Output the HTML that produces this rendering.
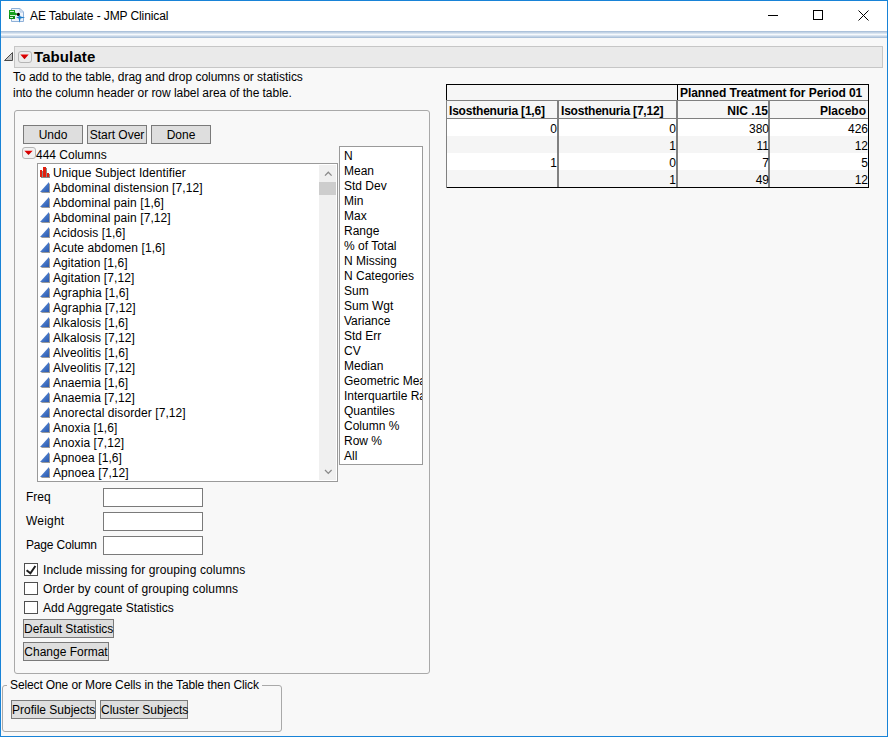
<!DOCTYPE html>
<html><head><meta charset="utf-8"><style>
*{box-sizing:border-box}
html,body{margin:0;padding:0}
body{width:888px;height:737px;overflow:hidden;position:relative;background:#f8f8f8;font-family:"Liberation Sans",sans-serif;font-size:12px;color:#000}
.a{position:absolute}
.t{position:absolute;white-space:nowrap;font-size:12px;line-height:15px}
.btn{position:absolute;height:19px;border:1px solid #7a7a7a;background:#dedede;font-size:12px;line-height:19px;text-align:center;white-space:nowrap}
.li{position:absolute;left:0;height:15px;white-space:nowrap;line-height:15px;letter-spacing:0.08px}
.li .ic{position:absolute;left:2px;top:1px}
.li span{position:absolute;left:15px;top:0}
.si{position:absolute;left:4px;height:15px;white-space:nowrap;line-height:15px}
.tb{position:absolute;width:100px;height:19px;border:1px solid #7a7a7a;background:#fff}
.cb{position:absolute;left:24px;width:14px;height:13px;border:1px solid #505050;background:#fff}
</style></head><body>
<!-- window frame -->
<div class="a" style="left:0;top:0;width:888px;height:737px;border:1px solid #1883d7;"></div>
<div class="a" style="left:1px;top:1px;width:886px;height:30px;background:#fff"></div>
<div class="a" style="left:1px;top:31px;width:886px;height:7px;background:linear-gradient(#a1b9d5,#d9e4f0 35%,#f6f9fc 50%,#d9e4f0 65%,#a1b9d5)"></div>
<!-- app icon -->
<svg class="a" style="left:6px;top:5px" width="24" height="22" viewBox="0 0 24 22">
 <path d="M5.5 3.5H14L17.5 7V16.5H5.5Z" fill="#eef3fa" stroke="#8fb1d9" stroke-width="1"/>
 <path d="M14 3.5V7H17.5" fill="none" stroke="#a9c4e4" stroke-width="1"/>
 <path d="M3 5H9V7.5L12 9L9 10.5V14H3Z" fill="#17a21f"/>
 <rect x="3" y="10" width="6" height="4" fill="#0c8a14"/>
 <rect x="4" y="6" width="4" height="1" fill="#d6f5d6"/><rect x="4" y="10" width="5" height="1" fill="#d6f5d6"/><rect x="4" y="12" width="3" height="1" fill="#d6f5d6"/>
 <circle cx="12.4" cy="9.4" r="1.6" fill="#0a0a0a"/>
 <path d="M13.6 9.3L14.5 11.6L19.2 12.5L14.5 13.4L13.6 18L12.7 13.4L10 12.5L12.7 11.6Z" fill="#1b7cc9"/>
</svg>
<div class="t" style="left:30px;top:9px;letter-spacing:-0.1px">AE Tabulate - JMP Clinical</div>
<!-- window controls -->
<div class="a" style="left:768px;top:15px;width:10px;height:1px;background:#000"></div>
<div class="a" style="left:813px;top:10px;width:10px;height:10px;border:1px solid #000"></div>
<svg class="a" style="left:858px;top:10px" width="11" height="11" viewBox="0 0 11 11"><path d="M0.5 0.5L10.5 10.5M10.5 0.5L0.5 10.5" stroke="#000" stroke-width="1"/></svg>

<!-- Tabulate header -->
<svg class="a" style="left:3px;top:51px" width="11" height="11" viewBox="0 0 11 11"><path d="M9.5 1.5 L9.5 9.5 L1.5 9.5 Z" fill="#c2c2c2" stroke="#4a4a4a" stroke-width="1" stroke-linejoin="round"/></svg>
<div class="a" style="left:14px;top:46px;width:869px;height:22px;border:1px solid #c6c6c6;background:#eaeaea"></div>
<div class="a" style="left:18px;top:51px;width:14px;height:12px;border:1px solid #b5b5b5;border-radius:3px;background:#ececec"></div>
<svg class="a" style="left:20px;top:54px" width="9" height="6" viewBox="0 0 9 6"><defs><linearGradient id="rg" x1="0" y1="0" x2="0" y2="1"><stop offset="0" stop-color="#e80000"/><stop offset="1" stop-color="#b80000"/></linearGradient></defs><path d="M0.3 0.6 L8.7 0.6 L4.5 5.2 Z" fill="url(#rg)"/></svg>
<div class="t" style="left:34px;top:48px;font-weight:bold;font-size:15px;line-height:18px;letter-spacing:0.1px">Tabulate</div>
<div class="t" style="left:13px;top:70px;letter-spacing:-0.03px">To add to the table, drag and drop columns or statistics</div>
<div class="t" style="left:13px;top:86px;letter-spacing:-0.04px">into the column header or row label area of the table.</div>

<!-- group box -->
<div class="a" style="left:14px;top:110px;width:416px;height:564px;border:1px solid #a9a9a9;border-radius:3px"></div>
<div class="btn" style="left:23px;top:125px;width:60px">Undo</div>
<div class="btn" style="left:87px;top:125px;width:60px">Start Over</div>
<div class="btn" style="left:151px;top:125px;width:60px">Done</div>
<div class="a" style="left:22px;top:147px;width:14px;height:12px;border:1px solid #b5b5b5;border-radius:3px;background:#f2f2f2"></div>
<svg class="a" style="left:24px;top:150px" width="9" height="6" viewBox="0 0 9 6"><path d="M0.3 0.8 L8.7 0.8 L4.5 5 Z" fill="url(#rg)"/></svg>
<div class="t" style="left:36px;top:148px">444 Columns</div>

<svg width="0" height="0" style="position:absolute"><defs><linearGradient id="bg" x1="0" y1="0" x2="1" y2="1"><stop offset="0" stop-color="#6a9ae0"/><stop offset="1" stop-color="#2858b0"/></linearGradient></defs></svg>
<!-- columns list -->
<div class="a" style="left:37px;top:163px;width:301px;height:319px;border:1px solid #9a9a9a;background:#fff;overflow:hidden">
 <div class="a" style="left:0;top:2px;width:280px;height:315px"><div class="li" style="top:0px"><svg class="ic" width="11" height="12" viewBox="0 0 11 12"><path d="M1 4h3v7H1zM4 1h3v10H4zM7 7h3v4H7z" fill="#8a8a8a"/><path d="M0 3h2v7H0zM3 0h3v10H3zM7 6h2v4H7z" fill="#e0200e"/></svg><span>Unique Subject Identifier</span></div><div class="li" style="top:15px"><svg class="ic" width="11" height="11" viewBox="0 0 11 11"><path d="M10 1 L10 11 L1 11 Z" fill="#9a9a9a"/><path d="M9 0 L9 10 L0 10 Z" fill="url(#bg)"/></svg><span>Abdominal distension [7,12]</span></div><div class="li" style="top:30px"><svg class="ic" width="11" height="11" viewBox="0 0 11 11"><path d="M10 1 L10 11 L1 11 Z" fill="#9a9a9a"/><path d="M9 0 L9 10 L0 10 Z" fill="url(#bg)"/></svg><span>Abdominal pain [1,6]</span></div><div class="li" style="top:45px"><svg class="ic" width="11" height="11" viewBox="0 0 11 11"><path d="M10 1 L10 11 L1 11 Z" fill="#9a9a9a"/><path d="M9 0 L9 10 L0 10 Z" fill="url(#bg)"/></svg><span>Abdominal pain [7,12]</span></div><div class="li" style="top:60px"><svg class="ic" width="11" height="11" viewBox="0 0 11 11"><path d="M10 1 L10 11 L1 11 Z" fill="#9a9a9a"/><path d="M9 0 L9 10 L0 10 Z" fill="url(#bg)"/></svg><span>Acidosis [1,6]</span></div><div class="li" style="top:75px"><svg class="ic" width="11" height="11" viewBox="0 0 11 11"><path d="M10 1 L10 11 L1 11 Z" fill="#9a9a9a"/><path d="M9 0 L9 10 L0 10 Z" fill="url(#bg)"/></svg><span>Acute abdomen [1,6]</span></div><div class="li" style="top:90px"><svg class="ic" width="11" height="11" viewBox="0 0 11 11"><path d="M10 1 L10 11 L1 11 Z" fill="#9a9a9a"/><path d="M9 0 L9 10 L0 10 Z" fill="url(#bg)"/></svg><span>Agitation [1,6]</span></div><div class="li" style="top:105px"><svg class="ic" width="11" height="11" viewBox="0 0 11 11"><path d="M10 1 L10 11 L1 11 Z" fill="#9a9a9a"/><path d="M9 0 L9 10 L0 10 Z" fill="url(#bg)"/></svg><span>Agitation [7,12]</span></div><div class="li" style="top:120px"><svg class="ic" width="11" height="11" viewBox="0 0 11 11"><path d="M10 1 L10 11 L1 11 Z" fill="#9a9a9a"/><path d="M9 0 L9 10 L0 10 Z" fill="url(#bg)"/></svg><span>Agraphia [1,6]</span></div><div class="li" style="top:135px"><svg class="ic" width="11" height="11" viewBox="0 0 11 11"><path d="M10 1 L10 11 L1 11 Z" fill="#9a9a9a"/><path d="M9 0 L9 10 L0 10 Z" fill="url(#bg)"/></svg><span>Agraphia [7,12]</span></div><div class="li" style="top:150px"><svg class="ic" width="11" height="11" viewBox="0 0 11 11"><path d="M10 1 L10 11 L1 11 Z" fill="#9a9a9a"/><path d="M9 0 L9 10 L0 10 Z" fill="url(#bg)"/></svg><span>Alkalosis [1,6]</span></div><div class="li" style="top:165px"><svg class="ic" width="11" height="11" viewBox="0 0 11 11"><path d="M10 1 L10 11 L1 11 Z" fill="#9a9a9a"/><path d="M9 0 L9 10 L0 10 Z" fill="url(#bg)"/></svg><span>Alkalosis [7,12]</span></div><div class="li" style="top:180px"><svg class="ic" width="11" height="11" viewBox="0 0 11 11"><path d="M10 1 L10 11 L1 11 Z" fill="#9a9a9a"/><path d="M9 0 L9 10 L0 10 Z" fill="url(#bg)"/></svg><span>Alveolitis [1,6]</span></div><div class="li" style="top:195px"><svg class="ic" width="11" height="11" viewBox="0 0 11 11"><path d="M10 1 L10 11 L1 11 Z" fill="#9a9a9a"/><path d="M9 0 L9 10 L0 10 Z" fill="url(#bg)"/></svg><span>Alveolitis [7,12]</span></div><div class="li" style="top:210px"><svg class="ic" width="11" height="11" viewBox="0 0 11 11"><path d="M10 1 L10 11 L1 11 Z" fill="#9a9a9a"/><path d="M9 0 L9 10 L0 10 Z" fill="url(#bg)"/></svg><span>Anaemia [1,6]</span></div><div class="li" style="top:225px"><svg class="ic" width="11" height="11" viewBox="0 0 11 11"><path d="M10 1 L10 11 L1 11 Z" fill="#9a9a9a"/><path d="M9 0 L9 10 L0 10 Z" fill="url(#bg)"/></svg><span>Anaemia [7,12]</span></div><div class="li" style="top:240px"><svg class="ic" width="11" height="11" viewBox="0 0 11 11"><path d="M10 1 L10 11 L1 11 Z" fill="#9a9a9a"/><path d="M9 0 L9 10 L0 10 Z" fill="url(#bg)"/></svg><span>Anorectal disorder [7,12]</span></div><div class="li" style="top:255px"><svg class="ic" width="11" height="11" viewBox="0 0 11 11"><path d="M10 1 L10 11 L1 11 Z" fill="#9a9a9a"/><path d="M9 0 L9 10 L0 10 Z" fill="url(#bg)"/></svg><span>Anoxia [1,6]</span></div><div class="li" style="top:270px"><svg class="ic" width="11" height="11" viewBox="0 0 11 11"><path d="M10 1 L10 11 L1 11 Z" fill="#9a9a9a"/><path d="M9 0 L9 10 L0 10 Z" fill="url(#bg)"/></svg><span>Anoxia [7,12]</span></div><div class="li" style="top:285px"><svg class="ic" width="11" height="11" viewBox="0 0 11 11"><path d="M10 1 L10 11 L1 11 Z" fill="#9a9a9a"/><path d="M9 0 L9 10 L0 10 Z" fill="url(#bg)"/></svg><span>Apnoea [1,6]</span></div><div class="li" style="top:300px"><svg class="ic" width="11" height="11" viewBox="0 0 11 11"><path d="M10 1 L10 11 L1 11 Z" fill="#9a9a9a"/><path d="M9 0 L9 10 L0 10 Z" fill="url(#bg)"/></svg><span>Apnoea [7,12]</span></div></div>
 <div class="a" style="left:281px;top:1px;width:17px;height:315px;background:#f0f0f0"></div>
 <div class="a" style="left:281px;top:18px;width:17px;height:13px;background:#cdcdcd"></div>
 <svg class="a" style="left:286px;top:7px" width="9" height="6" viewBox="0 0 9 6"><path d="M1 4.6L4.3 1.2L7.6 4.6" fill="none" stroke="#8a8a8a" stroke-width="1.3"/></svg>
 <svg class="a" style="left:286px;top:305px" width="9" height="6" viewBox="0 0 9 6"><path d="M1 1L4.3 4.4L7.6 1" fill="none" stroke="#8a8a8a" stroke-width="1.3"/></svg>
</div>

<!-- stats list -->
<div class="a" style="left:339px;top:146px;width:84px;height:319px;border:1px solid #9a9a9a;background:#fff;overflow:hidden">
 <div class="a" style="left:0;top:2px;width:82px;height:315px"><div class="si" style="top:0px">N</div><div class="si" style="top:15px">Mean</div><div class="si" style="top:30px">Std Dev</div><div class="si" style="top:45px">Min</div><div class="si" style="top:60px">Max</div><div class="si" style="top:75px">Range</div><div class="si" style="top:90px">% of Total</div><div class="si" style="top:105px">N Missing</div><div class="si" style="top:120px">N Categories</div><div class="si" style="top:135px">Sum</div><div class="si" style="top:150px">Sum Wgt</div><div class="si" style="top:165px">Variance</div><div class="si" style="top:180px">Std Err</div><div class="si" style="top:195px">CV</div><div class="si" style="top:210px">Median</div><div class="si" style="top:225px">Geometric Mean</div><div class="si" style="top:240px">Interquartile Range</div><div class="si" style="top:255px">Quantiles</div><div class="si" style="top:270px">Column %</div><div class="si" style="top:285px">Row %</div><div class="si" style="top:300px">All</div></div>
</div>

<!-- freq/weight/page -->
<div class="t" style="left:26px;top:490px">Freq</div>
<div class="tb" style="left:103px;top:488px"></div>
<div class="t" style="left:26px;top:514px;letter-spacing:0.2px">Weight</div>
<div class="tb" style="left:103px;top:512px"></div>
<div class="t" style="left:26px;top:538px;letter-spacing:-0.18px">Page Column</div>
<div class="tb" style="left:103px;top:536px"></div>

<!-- checkboxes -->
<div class="cb" style="top:563px"></div>
<svg class="a" style="left:24px;top:563px" width="14" height="13" viewBox="0 0 14 13"><path d="M2.6 7.2 L6.4 10.2 L11.4 3" fill="none" stroke="#1e1e1e" stroke-width="2"/></svg>
<div class="t" style="left:43px;top:563px;letter-spacing:0.12px">Include missing for grouping columns</div>
<div class="cb" style="top:582px"></div>
<div class="t" style="left:43px;top:582px;letter-spacing:0.13px">Order by count of grouping columns</div>
<div class="cb" style="top:601px"></div>
<div class="t" style="left:43px;top:601px">Add Aggregate Statistics</div>

<div class="btn" style="left:23px;top:619px;width:91px">Default Statistics</div>
<div class="btn" style="left:23px;top:642px;width:86px">Change Format</div>

<!-- bottom group -->
<div class="a" style="left:2px;top:685px;width:280px;height:47px;border:1px solid #a9a9a9;border-radius:3px"></div>
<div class="t" style="left:7px;top:678px;padding:0 3px 0 3px;background:#f8f8f8;letter-spacing:-0.12px">Select One or More Cells in the Table then Click</div>
<div class="btn" style="left:11px;top:700px;width:85px">Profile Subjects</div>
<div class="btn" style="left:100px;top:700px;width:88px">Cluster Subjects</div>

<!-- TABLE -->
<div class="a" style="left:446px;top:84px;width:423px;height:104px;background:#f8f8f8"></div>
<div class="a" style="left:447px;top:85px;width:421px;height:15px;background:#f6f6f6"></div>
<div class="a" style="left:447px;top:101px;width:421px;height:17px;background:#f6f6f6"></div>
<div class="a" style="left:447px;top:119px;width:421px;height:17px;background:#ffffff"></div>
<div class="a" style="left:447px;top:136px;width:421px;height:17px;background:#f5f5f5"></div>
<div class="a" style="left:447px;top:153px;width:421px;height:17px;background:#ffffff"></div>
<div class="a" style="left:447px;top:170px;width:421px;height:17px;background:#f5f5f5"></div>
<div class="a" style="left:446px;top:84px;width:423px;height:1px;background:#000"></div>
<div class="a" style="left:446px;top:187px;width:423px;height:1px;background:#000"></div>
<div class="a" style="left:868px;top:84px;width:1px;height:104px;background:#000"></div>
<div class="a" style="left:446px;top:84px;width:1px;height:17px;background:#000"></div>
<div class="a" style="left:446px;top:100px;width:1px;height:88px;background:#808080"></div>
<div class="a" style="left:677px;top:84px;width:1px;height:17px;background:#000"></div>
<div class="a" style="left:447px;top:100px;width:421px;height:1px;background:#808080"></div>
<div class="a" style="left:447px;top:118px;width:421px;height:1px;background:#808080"></div>
<div class="a" style="left:557px;top:100px;width:2px;height:87px;background:#808080"></div>
<div class="a" style="left:676px;top:100px;width:2px;height:87px;background:#808080"></div>
<div class="a" style="left:768px;top:100px;width:2px;height:87px;background:#808080"></div>
<div class="t" style="left:680px;top:86px;font-weight:bold;letter-spacing:-0.06px">Planned Treatment for Period 01</div>
<div class="t" style="left:449px;top:104px;font-weight:bold;letter-spacing:-0.2px">Isosthenuria [1,6]</div>
<div class="t" style="left:561px;top:104px;font-weight:bold;letter-spacing:-0.2px">Isosthenuria [7,12]</div>
<div class="t" style="left:678px;top:104px;width:90px;text-align:right;font-weight:bold">NIC .15</div>
<div class="t" style="left:770px;top:104px;width:96px;text-align:right;font-weight:bold">Placebo</div>
<div class="t" style="left:457px;top:122px;width:100px;text-align:right">0</div>
<div class="t" style="left:576px;top:122px;width:100px;text-align:right">0</div>
<div class="t" style="left:669px;top:122px;width:100px;text-align:right">380</div>
<div class="t" style="left:768px;top:122px;width:100px;text-align:right">426</div>
<div class="t" style="left:576px;top:139px;width:100px;text-align:right">1</div>
<div class="t" style="left:669px;top:139px;width:100px;text-align:right">11</div>
<div class="t" style="left:768px;top:139px;width:100px;text-align:right">12</div>
<div class="t" style="left:457px;top:156px;width:100px;text-align:right">1</div>
<div class="t" style="left:576px;top:156px;width:100px;text-align:right">0</div>
<div class="t" style="left:669px;top:156px;width:100px;text-align:right">7</div>
<div class="t" style="left:768px;top:156px;width:100px;text-align:right">5</div>
<div class="t" style="left:576px;top:173px;width:100px;text-align:right">1</div>
<div class="t" style="left:669px;top:173px;width:100px;text-align:right">49</div>
<div class="t" style="left:768px;top:173px;width:100px;text-align:right">12</div>
</body></html>
